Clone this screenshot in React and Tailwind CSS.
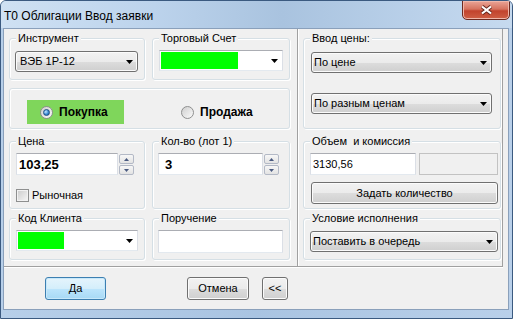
import React from "react";

// Windows 7 style order dialog

const btnGray =
  "rounded-[3px] border border-[#707070] bg-[linear-gradient(#f2f2f2,#ebebeb_50%,#dddddd_50%,#cfcfcf)] shadow-[inset_0_0_0_1px_#fbfbfb]";
const textBox =
  "border border-[#abadb3] border-x-[#dbdfe6] border-b-[#e3e9ef] bg-white";

function Caret() {
  return (
    <svg width="7" height="4" viewBox="0 0 7 4" className="shrink-0">
      <path d="M0 0H7L3.5 4Z" fill="#000" />
    </svg>
  );
}

function Group({ label, className, children }) {
  return (
    <div
      className={`relative shrink-0 rounded-[3px] border border-[#d5dfe5] shadow-[inset_1px_1px_0_#fff,1px_1px_0_#fff] ${className}`}
    >
      {label && (
        <span className="absolute -top-[8px] left-[6px] whitespace-pre bg-[#f0f0f0] px-[2px] leading-[14px]">
          {label}
        </span>
      )}
      {children}
    </div>
  );
}

function Select({ value, className }) {
  return (
    <div className={`flex items-center justify-between pr-[4px] ${btnGray} ${className}`}>
      <span>{value}</span>
      <Caret />
    </div>
  );
}

function ColorCombo({ className, fill }) {
  return (
    <div className={`flex items-center justify-between pl-[1px] pr-[4px] ${textBox} ${className}`}>
      <div className={`h-[17px] bg-[#00ff00] ${fill}`} />
      <Caret />
    </div>
  );
}

function SpinBtn({ up }) {
  return (
    <div className="flex h-[10px] w-[15px] items-center justify-center rounded-[2px] border border-[#b3b9c6] bg-[linear-gradient(#f7f7f7,#e3e3e3)]">
      <svg width="5" height="3" viewBox="0 0 5 3">
        <path d={up ? "M0 3H5L2.5 0Z" : "M0 0H5L2.5 3Z"} fill="#4a5a80" />
      </svg>
    </div>
  );
}

function Spin() {
  return (
    <div className="ml-[1px] mt-[1px] flex flex-col gap-[1px]">
      <SpinBtn up />
      <SpinBtn />
    </div>
  );
}

function Radio({ checked }) {
  return (
    <div className="flex h-[13px] w-[13px] shrink-0 items-center justify-center rounded-full border border-[#8e8f8f] bg-[linear-gradient(135deg,#cfcfcf,#fafafa)]">
      {checked && (
        <div className="h-[7px] w-[7px] rounded-full border border-[#1d4f86] bg-[radial-gradient(circle_at_35%_35%,#c4e6ff,#3a8bd6_55%,#1b4d87)]" />
      )}
    </div>
  );
}

export default function App() {
  return (
    <div className="flex h-[319px] w-[513px] flex-col overflow-hidden rounded-t-[6px] border border-[#3b5a80] bg-[linear-gradient(90deg,#b7cfe9,#a9c4e2_50%,#b9d0ea)] font-['Liberation_Sans',Arial,sans-serif] text-[11px] leading-[13px] text-black">
      {/* title bar */}
      <div className="flex h-[27px] shrink-0 items-start bg-[linear-gradient(90deg,#cfe1f3,#bcd3ec_30%,#a9c3df_55%,#b9d0e9_80%,#c6daef)]">
        <span className="pl-[3px] pt-[8px] text-[12px] leading-[14px]">T0 Облигации Ввод заявки</span>
        <div className="-mt-[1px] ml-auto mr-[2px] flex h-[20px] w-[48px] items-center justify-center rounded-b-[5px] border border-[#6e2a20] bg-[linear-gradient(#eaa597,#d6735f_45%,#c2432d_55%,#cf5f45)] shadow-[inset_0_0_0_1px_#f0b7aa]">
          <svg width="13" height="10" viewBox="0 0 13 10">
            <path d="M2 1.5L11 8.5M11 1.5L2 8.5" stroke="#6a2a20" strokeWidth="4" />
            <path d="M2 1.5L11 8.5M11 1.5L2 8.5" stroke="#fff" strokeWidth="2.2" />
          </svg>
        </div>
      </div>

      {/* client area */}
      <div className="ml-[2px] flex h-[282px] w-[506px] shrink-0 flex-col border border-[#8aa0bb] bg-[#f0f0f0]">
        <div className="flex h-[238px] w-[499px] shrink-0 border-b border-r border-[#a0a0a0] shadow-[0_1px_0_#fff]">
          {/* left panel */}
          <div className="flex w-[294px] shrink-0 flex-col border-r border-[#a0a0a0] pl-[5px] pt-[9px]">
            <div className="flex gap-[7px]">
              <Group label="Инструмент" className="h-[42px] w-[136px] pl-[5px] pt-[12px]">
                <Select value="ВЭБ 1Р-12" className="h-[21px] w-[123px] pl-[4px]" />
              </Group>
              <Group label="Торговый Счет" className="h-[42px] w-[138px] pl-[6px] pt-[11px]">
                <ColorCombo className="h-[21px] w-[124px]" fill="w-[77px]" />
              </Group>
            </div>

            <Group className="mt-[8px] flex h-[41px] w-[281px] items-start pl-[17px] pt-[11px]">
              <div className="flex h-[24px] w-[97px] items-center bg-[#7fd65b] pl-[13px]">
                <Radio checked />
                <span className="ml-[6px] text-[12px] font-bold">Покупка</span>
              </div>
              <div className="ml-[57px] flex h-[24px] items-center">
                <Radio />
                <span className="ml-[6px] text-[12px] font-bold">Продажа</span>
              </div>
            </Group>

            <div className="mt-[12px] flex gap-[7px]">
              <Group label="Цена" className="h-[68px] w-[136px] pl-[6px] pt-[11px]">
                <div className="flex items-start">
                  <div className={`flex h-[22px] w-[102px] items-center pl-[2px] text-[13px] font-bold ${textBox}`}>
                    103,25
                  </div>
                  <Spin />
                </div>
                <div className="mt-[14px] flex items-center">
                  <div className="h-[13px] w-[13px] border border-[#8e8f8f] bg-[linear-gradient(135deg,#cbcbcb,#f7f7f7)] shadow-[inset_0_0_0_1px_#f2f2f2]" />
                  <span className="ml-[3px]">Рыночная</span>
                </div>
              </Group>
              <Group label="Кол-во (лот 1)" className="h-[68px] w-[138px] pl-[5px] pt-[11px]">
                <div className="flex items-start">
                  <div className={`flex h-[22px] w-[105px] items-center pl-[6px] text-[13px] font-bold ${textBox}`}>
                    3
                  </div>
                  <Spin />
                </div>
              </Group>
            </div>

            <div className="mt-[9px] flex gap-[7px]">
              <Group label="Код Клиента" className="h-[42px] w-[136px] pl-[6px] pt-[11px]">
                <ColorCombo className="h-[21px] w-[122px]" fill="w-[46px]" />
              </Group>
              <Group label="Поручение" className="h-[42px] w-[138px] pl-[5px] pt-[11px]">
                <div className={`h-[23px] w-[125px] ${textBox}`} />
              </Group>
            </div>
          </div>

          {/* right panel */}
          <div className="flex flex-1 flex-col border-l border-white pl-[4px] pt-[9px]">
            <Group label="Ввод цены:" className="h-[91px] w-[198px] pl-[7px] pt-[13px]">
              <Select value="По цене" className="h-[21px] w-[181px] pl-[2px]" />
              <Select value="По разным ценам" className="mt-[20px] h-[21px] w-[181px] pl-[2px]" />
            </Group>

            <Group label="Объем  и комиссия" className="mt-[12px] h-[68px] w-[198px] pl-[6px] pt-[11px]">
              <div className="flex">
                <div className={`flex h-[22px] w-[106px] items-center pl-[2px] ${textBox}`}>3130,56</div>
                <div className="ml-[3px] h-[22px] w-[79px] border border-[#c2c2c2] bg-[#f0f0f0]" />
              </div>
              <div className={`ml-[1px] mt-[7px] flex h-[22px] w-[187px] items-center justify-center ${btnGray}`}>
                Задать количество
              </div>
            </Group>

            <Group label="Условие исполнения" className="mt-[9px] h-[42px] w-[198px] pl-[6px] pt-[12px]">
              <Select value="Поставить в очередь" className="h-[21px] w-[188px] pl-[2px]" />
            </Group>
          </div>
        </div>

        {/* buttons */}
        <div className="flex pt-[10px]">
          <div className="ml-[41px] flex h-[23px] w-[61px] items-center justify-center rounded-[3px] border border-[#3c7fb1] bg-[linear-gradient(#e5f4fc,#d4eefb_50%,#bde5fc_50%,#a7d9f5)] shadow-[inset_0_0_0_1px_#c7e8fa]">
            Да
          </div>
          <div className={`ml-[81px] flex h-[23px] w-[62px] items-center justify-center ${btnGray}`}>
            Отмена
          </div>
          <div className={`ml-[13px] flex h-[23px] w-[26px] items-center justify-center ${btnGray}`}>
            &lt;&lt;
          </div>
        </div>
      </div>
    </div>
  );
}
